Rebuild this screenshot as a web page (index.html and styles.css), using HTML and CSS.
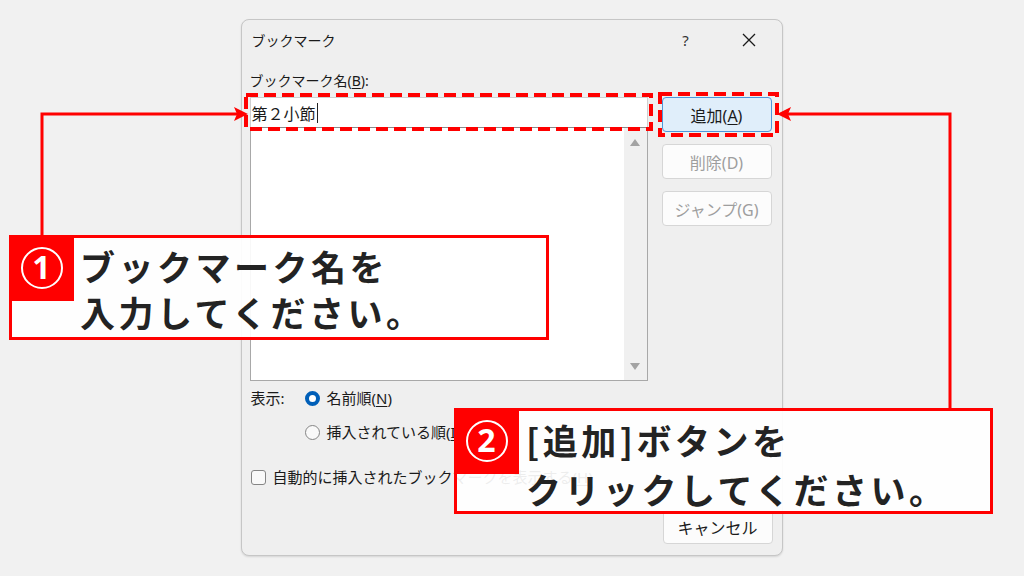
FILE: index.html
```html
<!DOCTYPE html>
<html lang="ja">
<head>
<meta charset="utf-8">
<title>ブックマーク</title>
<link rel="stylesheet" href="styles.css">
</head>
<body>
<div class="stage">
  <div class="dialog">
    <div class="titlebar">
      <span class="title">ブックマーク</span>
      <span class="help">?</span>
      <span class="close"><svg width="14" height="14" viewBox="0 0 14 14"><path d="M1 1L13 13M13 1L1 13" stroke="#1a1a1a" stroke-width="1.3" fill="none"/></svg></span>
    </div>
    <div class="content">
      <div class="label">ブックマーク名(<u>B</u>):</div>
      <div class="main">
        <div class="left">
          <div class="input"><span class="value">第２小節</span><span class="caret"></span></div>
          <div class="list">
            <div class="list-area"></div>
            <div class="scrollbar">
              <svg width="10" height="7" viewBox="0 0 10 7"><path d="M5 0L10 7H0Z" fill="#a3a3a3"/></svg>
              <svg width="10" height="7" viewBox="0 0 10 7"><path d="M0 0H10L5 7Z" fill="#a3a3a3"/></svg>
            </div>
          </div>
        </div>
        <div class="buttons">
          <div class="btn primary"><span>追加(<u>A</u>)</span></div>
          <div class="btn disabled"><span>削除(D)</span></div>
          <div class="btn disabled"><span>ジャンプ(G)</span></div>
        </div>
      </div>
      <div class="sort">
        <span class="sort-label">表示:</span>
        <div class="radios">
          <div class="radio"><span class="dot checked"></span><span>名前順(<u>N</u>)</span></div>
          <div class="radio"><span class="dot"></span><span>挿入されている順(<u>I</u>)</span></div>
        </div>
      </div>
      <div class="check"><span class="box"></span><span>自動的に挿入されたブックマークを表示する(<u>H</u>)</span></div>
      <div class="footer"><div class="btn"><span>キャンセル</span></div></div>
    </div>
  </div>

  <svg class="annot" width="1024" height="576" viewBox="0 0 1024 576">
    <g fill="none" stroke="#ff0000">
      <rect x="246" y="95" width="405" height="34" stroke-width="4" stroke-dasharray="12 6"/>
      <rect x="660" y="94" width="117" height="41" stroke-width="4" stroke-dasharray="12 6"/>
      <polyline points="42,236 42,114 238,114" stroke-width="3"/>
      <polyline points="950,409 950,114 787,114" stroke-width="3"/>
    </g>
    <g fill="#ff0000">
      <path d="M248 114L234 107L237 114L234 121Z"/>
      <path d="M777 114L791 107L788 114L791 121Z"/>
    </g>
  </svg>

  <div class="callout c1">
    <div class="badge"><span class="num">1</span></div>
    <div class="ctext">ブックマーク名を<br>入力してください。</div>
  </div>
  <div class="callout c2">
    <div class="badge"><span class="num">2</span></div>
    <div class="ctext">[追加]ボタンを<br>クリックしてください。</div>
  </div>
</div>
</body>
</html>
```

FILE: styles.css
```css
* { box-sizing: border-box; }
html, body {
  margin: 0;
  padding: 0;
  background: #f1f1f1;
}
.stage {
  position: relative;
  width: 1024px;
  height: 576px;
  overflow: hidden;
  display: flex;
  justify-content: center;
  padding-top: 19px;
  font-family: "Noto Sans", "Noto Sans CJK JP", sans-serif;
  color: #1a1a1a;
}
.dialog {
  width: 542px;
  height: 537px;
  margin-left: -1px;
  background: #efefef;
  border: 1px solid #c6c6c6;
  border-radius: 8px;
  box-shadow: 0 1px 2px rgba(0,0,0,0.12);
  display: flex;
  flex-direction: column;
}
.titlebar {
  height: 40px;
  display: flex;
  align-items: center;
  padding: 0 10px;
  font-size: 14px;
}
.title { flex: 1; }
.help {
  width: 46px;
  text-align: center;
  font-size: 15px;
  color: #333;
}
.close {
  width: 46px;
  margin-left: 17px;
  display: flex;
  justify-content: center;
}
.content {
  padding: 0 9px 0 8px;
  display: flex;
  flex-direction: column;
  font-size: 14px;
}
.label {
  margin-top: 11px;
  line-height: 20px;
}
.main {
  margin-top: 6px;
  display: flex;
  gap: 14px;
}
.left {
  width: 398px;
  display: flex;
  flex-direction: column;
}
.input {
  height: 31px;
  background: #fff;
  border: 1px solid #cfcfcf;
  border-bottom: 1px solid #8a8a8a;
  display: flex;
  align-items: center;
  padding-left: 1px;
  font-size: 16px;
}
.caret {
  width: 1px;
  height: 20px;
  background: #222;
  margin-left: 1px;
}
.list {
  height: 253px;
  background: #fff;
  border: 1px solid #a8a8a8;
  border-top: none;
  display: flex;
}
.list-area { flex: 1; }
.scrollbar {
  width: 23px;
  background: #f0f0f0;
  display: flex;
  flex-direction: column;
  justify-content: space-between;
  align-items: center;
  padding: 11px 0 10px;
}
.buttons {
  width: 110px;
  display: flex;
  flex-direction: column;
  gap: 12px;
}
.btn {
  height: 35px;
  background: #fcfcfc;
  border: 1px solid #d6d6d6;
  border-radius: 4px;
  display: flex;
  align-items: center;
  justify-content: center;
  font-size: 16px;
}
.btn.primary {
  background: #e0eefa;
  border-color: #4d97db;
}
.btn.disabled { color: #9e9e9e; }
.sort {
  margin-top: 7px;
  display: flex;
}
.sort-label {
  width: 55px;
  line-height: 20px;
  padding-left: 1px;
  font-size: 15px;
}
.radios {
  display: flex;
  flex-direction: column;
  gap: 14px;
}
.radio {
  display: flex;
  align-items: center;
  gap: 7px;
  line-height: 20px;
  font-size: 15px;
}
.dot {
  width: 15px;
  height: 15px;
  border-radius: 50%;
  border: 1px solid #858585;
  background: #f9f9f9;
}
.dot.checked {
  border: 4px solid #005fb8;
  background: #fff;
}
.check {
  margin-top: 25px;
  display: flex;
  align-items: center;
  gap: 7px;
  line-height: 20px;
  padding-left: 1px;
  font-size: 15px;
}
.box {
  width: 15px;
  height: 15px;
  border: 1px solid #858585;
  border-radius: 3px;
  background: #f9f9f9;
}
.footer {
  margin-top: 23px;
  display: flex;
  justify-content: flex-end;
}
.footer .btn {
  width: 110px;
  height: 34px;
}
u { text-decoration-thickness: 1px; text-underline-offset: 2px; }

.annot {
  position: absolute;
  left: 0;
  top: 0;
}
.callout {
  position: absolute;
  background: rgba(255,255,255,0.92);
  border: 3px solid #ff0000;
  color: #232323;
  font-family: "Noto Sans CJK JP", "Noto Sans", sans-serif;
  font-weight: 700;
  font-size: 35px;
  letter-spacing: 3.5px;
}
.c1 { left: 9px; top: 235px; width: 540px; height: 105px; }
.c2 { left: 454px; top: 408px; width: 539px; height: 106px; }
.badge {
  position: absolute;
  left: -3px;
  top: -3px;
  width: 65px;
  height: 66px;
  background: #ff0000;
  display: flex;
  align-items: center;
  justify-content: center;
}
.num {
  width: 42px;
  height: 42px;
  border: 2px solid #fff;
  border-radius: 50%;
  color: #fff;
  font-size: 32px;
  line-height: 36px;
  letter-spacing: 0;
  text-align: center;
  font-family: "Noto Sans", "Noto Sans CJK JP", sans-serif;
}
.c1 .ctext {
  padding: 5px 0 0 68px;
  line-height: 46px;
}
.c2 .ctext {
  padding: 4px 0 0 69px;
  line-height: 49px;
}
```
